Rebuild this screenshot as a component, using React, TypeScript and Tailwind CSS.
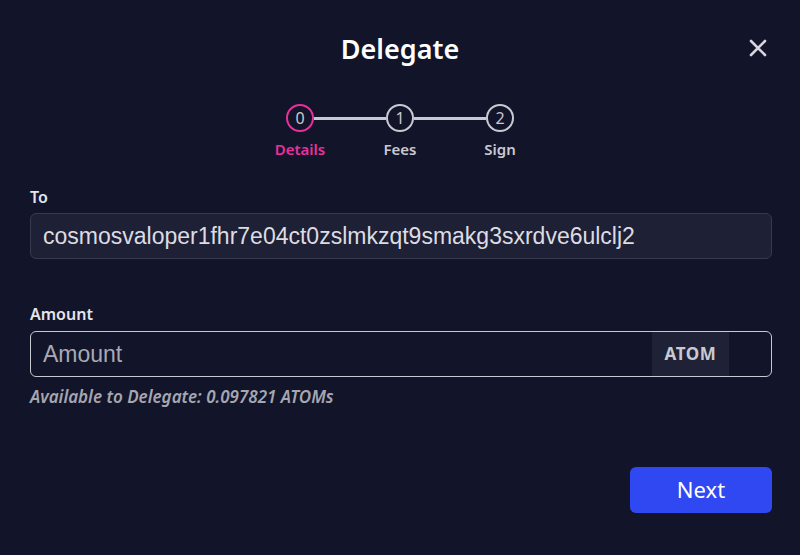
import React from "react";

const font = { fontFamily: '"Noto Sans", "Open Sans", sans-serif' };
const arial = { fontFamily: '"Liberation Sans", Arial, sans-serif' };

function Step({ n, label, active }: { n: number; label: string; active?: boolean }) {
  return (
    <div className="relative flex w-[28px] flex-col items-center">
      <div
        className={`flex h-[28px] w-[28px] items-center justify-center rounded-full border-2 text-[16px] ${
          active ? "border-[#e8309a] text-[#c9c9d2]" : "border-[#c9c9d2] text-[#c9c9d2]"
        }`}
      >
        {n}
      </div>
      <div
        className={`absolute top-[34px] whitespace-nowrap text-[15px] font-semibold ${
          active ? "text-[#e8309a]" : "text-[#c9c9d2]"
        }`}
      >
        {label}
      </div>
    </div>
  );
}

export default function App() {
  return (
    <div className="h-[555px] w-[800px] bg-[#12142a] text-white" style={font}>
      <div className="relative flex h-[96px] items-center justify-center">
        <h1 className="mt-[2px] text-[27px] font-semibold text-white">Delegate</h1>
        <button className="absolute right-[33px] top-[39px] text-[#d6d6dc]">
          <svg width="18" height="18" viewBox="0 0 18 18" fill="none" stroke="currentColor" strokeWidth="2.6" strokeLinecap="round">
            <path d="M2 2L16 16M16 2L2 16" />
          </svg>
        </button>
      </div>
      <div className="flex h-[62px] items-start justify-center pt-[8px]">
        <Step n={0} label="Details" active />
        <div className="mt-[12.5px] h-[3px] w-[72px] bg-[#c9c9d2]" />
        <Step n={1} label="Fees" />
        <div className="mt-[12.5px] h-[3px] w-[72px] bg-[#c9c9d2]" />
        <Step n={2} label="Sign" />
      </div>
      <div className="pl-[30px] pr-[28px] pt-[27px]">
        <div className="text-[16px] font-semibold text-[#e4e4ea]">To</div>
        <div
          className="mt-[4px] flex h-[46px] items-center rounded-[6px] border border-[#363951] bg-[#1e2036] px-[12px] text-[23px] text-[#dcdce2]"
          style={arial}
        >
          cosmosvaloper1fhr7e04ct0zslmkzqt9smakg3sxrdve6ulclj2
        </div>
        <div className="mt-[43px] text-[16px] font-semibold text-[#e4e4ea]">Amount</div>
        <div className="mt-[5px] flex h-[46px] items-stretch overflow-hidden rounded-[6px] border-[1.5px] border-[#c8c8d0]">
          <div className="flex flex-1 items-center px-[12px] text-[23px] text-[#a9a9b3]" style={arial}>
            Amount
          </div>
          <div className="flex w-[77px] items-center justify-center bg-[#1f2136] text-[17px] font-bold tracking-[0.6px] text-[#c9c9d2]">
            ATOM
          </div>
          <div className="w-[42px]" />
        </div>
        <div className="mt-[7px] text-[17px] font-semibold italic text-[#a6a6b0]">
          Available to Delegate: 0.097821 ATOMs
        </div>
        <div className="mt-[57px] flex justify-end">
          <button className="flex h-[46px] w-[142px] items-center justify-center rounded-[6px] bg-[#3048f2] text-[22px] text-white">
            Next
          </button>
        </div>
      </div>
    </div>
  );
}
